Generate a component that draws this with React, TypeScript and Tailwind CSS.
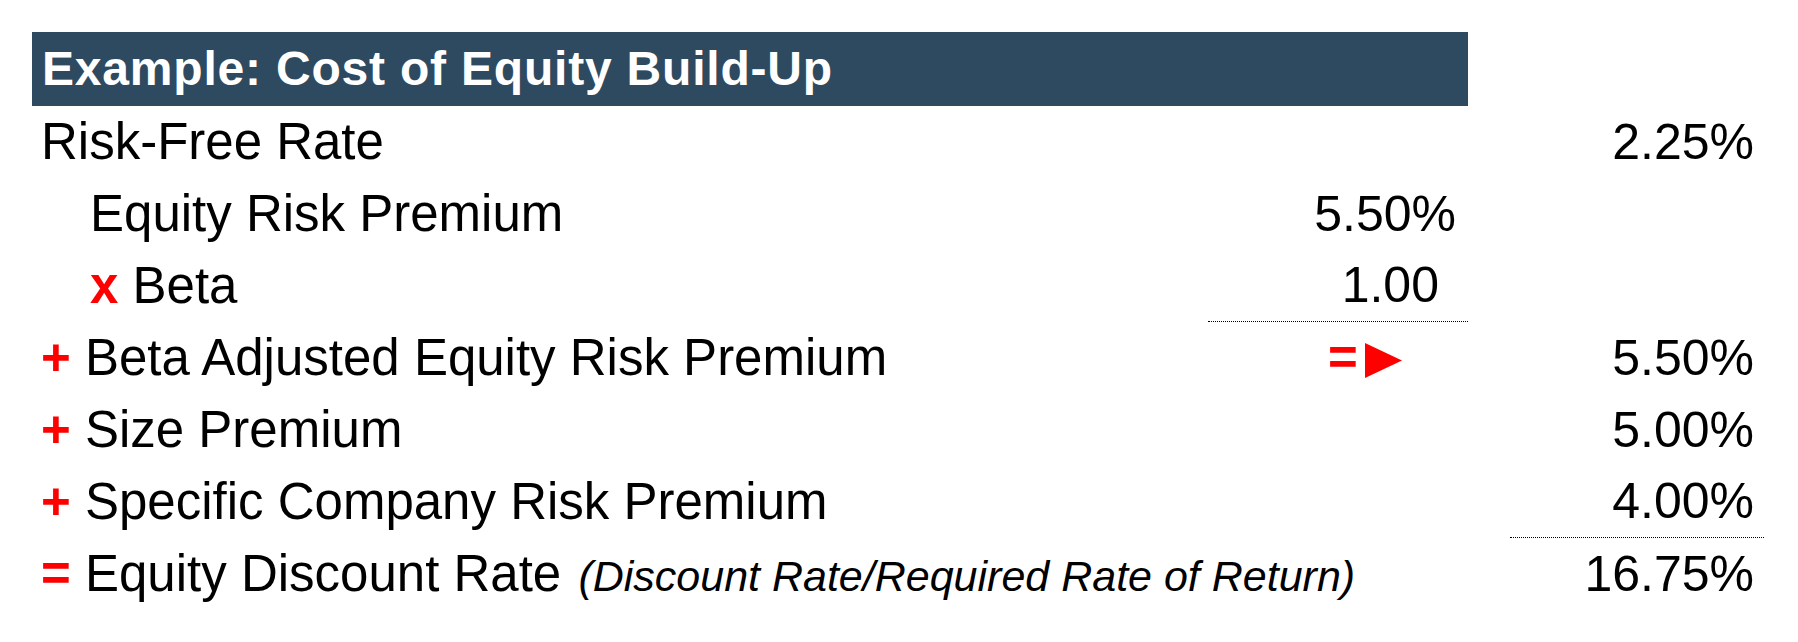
import React from "react";

const Red = ({ children }: { children: React.ReactNode }) => (
  <span className="font-bold text-[#ff0000]">{children}</span>
);

export default function App() {
  const rowCls =
    "grid grid-cols-[1176px_260px_42px_254px] h-[72px] text-[51px] leading-[72px] whitespace-nowrap";
  const num = "pr-[10px] text-right text-[50px]";
  return (
    <div className="min-h-[642px] w-[1798px] bg-white pl-[32px] pt-[32px] text-black font-['Liberation_Sans',Arial,sans-serif]">
      <div className="grid grid-cols-[1176px_260px_42px_254px]">
        <div className="col-span-2 flex h-[74px] items-center bg-[#2e4a61] pl-[10px] text-[48px] font-bold tracking-[0.8px] text-white whitespace-nowrap">
          Example: Cost of Equity Build-Up
        </div>
      </div>

      <div className={rowCls}>
        <div className="pl-[9px]">Risk-Free Rate</div>
        <div />
        <div />
        <div className={num}>2.25%</div>
      </div>

      <div className={rowCls}>
        <div className="pl-[58px]">Equity Risk Premium</div>
        <div className="pr-[12px] text-right text-[50px]">5.50%</div>
        <div />
        <div />
      </div>

      <div className={rowCls}>
        <div className="pl-[58px]">
          <Red>x</Red> Beta
        </div>
        <div className="border-b border-dotted border-black pr-[29px] text-right text-[50px] leading-[71px]">
          1.00
        </div>
        <div />
        <div />
      </div>

      <div className={rowCls}>
        <div className="pl-[9px]">
          <Red>+</Red> Beta Adjusted Equity Risk Premium
        </div>
        <div className="flex items-center pl-[120px]">
          <Red>=</Red>
          <svg
            width="37"
            height="35"
            viewBox="0 0 37 35"
            className="ml-[7px] mt-[5px] block"
          >
            <polygon points="0,0 37,17.5 0,35" fill="#ff0000" />
          </svg>
        </div>
        <div />
        <div className={num}>5.50%</div>
      </div>

      <div className={rowCls}>
        <div className="pl-[9px]">
          <Red>+</Red> Size Premium
        </div>
        <div />
        <div />
        <div className={num}>5.00%</div>
      </div>

      <div className={rowCls}>
        <div className="pl-[9px]">
          <Red>+</Red> Specific Company Risk Premium
        </div>
        <div />
        <div />
        <div className="border-b border-dotted border-black pr-[10px] text-right text-[50px] leading-[71px]">
          4.00%
        </div>
      </div>

      <div className={rowCls}>
        <div className="pl-[9px]">
          <Red>=</Red> Equity Discount Rate{" "}
          <i className="ml-[3px] text-[43px]">
            (Discount Rate/Required Rate of Return)
          </i>
        </div>
        <div />
        <div />
        <div className={num}>16.75%</div>
      </div>
    </div>
  );
}
